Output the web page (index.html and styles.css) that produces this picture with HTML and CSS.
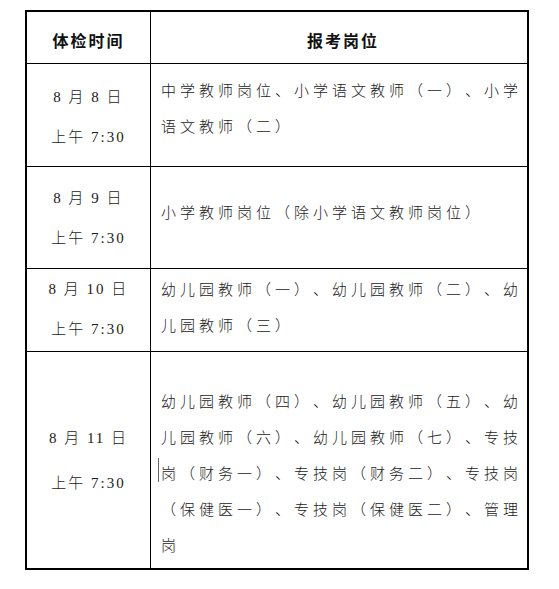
FILE: index.html
```html
<!DOCTYPE html>
<html lang="zh-CN">
<head>
<meta charset="utf-8">
<title>体检安排</title>
<link rel="stylesheet" href="styles.css">
</head>
<body>
<table class="schedule">
  <thead>
    <tr class="row-head">
      <th class="col-time">体检时间</th>
      <th class="col-post">报考岗位</th>
    </tr>
  </thead>
  <tbody>
    <tr class="row r1">
      <td class="col-time"><p class="date">8 月 8 日</p><p class="hour">上午 7:30</p></td>
      <td class="col-post">中学教师岗位、小学语文教师（一）、小学语文教师（二）</td>
    </tr>
    <tr class="row r2">
      <td class="col-time"><p class="date">8 月 9 日</p><p class="hour">上午 7:30</p></td>
      <td class="col-post">小学教师岗位（除小学语文教师岗位）</td>
    </tr>
    <tr class="row r3">
      <td class="col-time"><p class="date">8 月 10 日</p><p class="hour">上午 7:30</p></td>
      <td class="col-post">幼儿园教师（一）、幼儿园教师（二）、幼儿园教师（三）</td>
    </tr>
    <tr class="row r4">
      <td class="col-time"><p class="date">8 月 11 日</p><p class="hour">上午 7:30</p></td>
      <td class="col-post">幼儿园教师（四）、幼儿园教师（五）、幼儿园教师（六）、幼儿园教师（七）、专技<span class="caret-host">岗</span>（财务一）、专技岗（财务二）、专技岗（保健医一）、专技岗（保健医二）、管理岗</td>
    </tr>
  </tbody>
</table>
</body>
</html>
```
FILE: styles.css
```css
html, body {
  margin: 0;
  padding: 0;
  background: #fff;
}

body {
  padding: 10px 0 0 25px;
  font-family: "Liberation Serif", "Noto Sans CJK SC", serif;
  color: #1a1a1a;
  text-spacing-trim: space-all;
}

.schedule {
  border: 2px solid #000;
  border-collapse: separate;
  border-spacing: 0;
  width: 504px;
  table-layout: fixed;
}

.schedule th,
.schedule td {
  padding: 0;
  border: 0;
  box-sizing: border-box;
}

.col-time {
  width: 124px;
  border-right: 1px solid #000 !important;
  text-align: center;
}

.row-head th {
  height: 52px;
  border-bottom: 1px solid #000;
  font-family: "Noto Sans CJK SC", sans-serif;
  font-weight: 700;
  font-size: 16px;
  letter-spacing: 2px;
  color: #111;
  padding-top: 4px;
  text-align: center;
}

.row td {
  vertical-align: top;
  border-bottom: 1px solid #000;
}

.row.r4 td {
  border-bottom: 0;
}

.r1 td { height: 103px; }
.r2 td { height: 102px; }
.r3 td { height: 83px; }
.r4 td { height: 216px; }

.col-time p {
  margin: 0;
  font-size: 15px;
  line-height: 40px;
  letter-spacing: 2px;
  font-weight: 300;
}

.col-post {
  padding-left: 10px !important;
  padding-right: 2px !important;
  font-size: 15px;
  line-height: 36px;
  letter-spacing: 4px;
  font-weight: 300;
  text-align: left;
  font-family: "Noto Sans CJK SC", sans-serif;
  text-spacing-trim: space-all;
  font-kerning: none;
}

.r1 .col-time { padding-top: 13px; }
.r2 .col-time { padding-top: 11px; }
.r3 .col-time { padding-top: 0; }
.r4 .col-time { padding-top: 66px; }
.r4 .col-time .hour { margin-top: 5px; }

.r1 .col-post { padding-top: 8px; }
.r2 .col-post { padding-top: 27px; }
.r3 .col-post { padding-top: 2px; }
.r4 .col-post { padding-top: 31px; }

.caret-host {
  position: relative;
}

.caret-host::before {
  content: "";
  position: absolute;
  left: -3px;
  top: -4px;
  height: 24px;
  border-left: 1px solid #666;
}
```
